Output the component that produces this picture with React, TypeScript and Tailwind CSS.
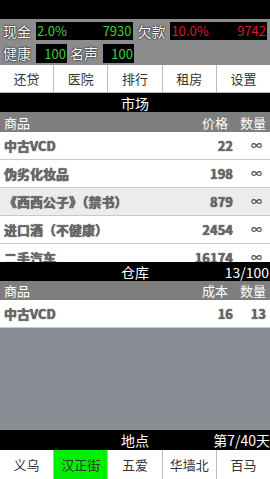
import React from "react";

const F = { fontFamily: '"Noto Sans CJK SC", "Noto Sans", sans-serif' };

const market = [
  { name: "中古VCD", price: 22, bg: "bg-white" },
  { name: "伪劣化妆品", price: 198, bg: "bg-white" },
  { name: "《西西公子》（禁书）", price: 879, bg: "bg-[#ececec]" },
  { name: "进口酒（不健康）", price: 2454, bg: "bg-white" },
  { name: "二手汽车", price: 16174, bg: "bg-white" },
];

const itemText =
  "font-bold text-[#6a6a6a] [text-shadow:0_0_1px_#111]";

export default function App() {
  return (
    <div className="w-[270px] h-[479px] overflow-hidden flex flex-col bg-black" style={F}>
      <div className="h-[19px] bg-black" />
      {/* stats */}
      <div className="h-[46px] bg-[#8c8c8c] flex flex-col justify-center gap-[4px] px-[3px]">
        <div className="flex items-center h-[18px]">
          <span className="w-[33px] text-[14px] text-white [text-shadow:0_0_2px_#000,0_0_1px_#000] leading-none">现金</span>
          <div className="w-[97px] h-[18px] bg-black flex items-center justify-between px-[1px] text-[13px] text-[#3ad13a] leading-none">
            <span>2.0%</span>
            <span>7930</span>
          </div>
          <span className="ml-[5px] w-[33px] text-[14px] text-white [text-shadow:0_0_2px_#000,0_0_1px_#000] leading-none">欠款</span>
          <div className="w-[97px] h-[18px] bg-black flex items-center justify-between px-[1px] text-[13px] text-[#d81a2a] leading-none">
            <span>10.0%</span>
            <span>9742</span>
          </div>
        </div>
        <div className="flex items-center h-[19px]">
          <span className="w-[33px] text-[14px] text-white [text-shadow:0_0_2px_#000,0_0_1px_#000] leading-none">健康</span>
          <div className="w-[31px] h-[19px] bg-black flex items-center justify-end px-[1px] text-[13px] text-[#3ad13a] leading-none">100</div>
          <span className="ml-[3px] w-[33px] text-[14px] text-white [text-shadow:0_0_2px_#000,0_0_1px_#000] leading-none">名声</span>
          <div className="w-[31px] h-[19px] bg-black flex items-center justify-end px-[1px] text-[13px] text-[#3ad13a] leading-none">100</div>
        </div>
      </div>
      {/* actions */}
      <div className="h-[28px] flex bg-white">
        {["还贷", "医院", "排行", "租房", "设置"].map((t, i) => (
          <div
            key={t}
            className={`flex-1 flex items-center justify-center text-[13px] text-[#333] border-b border-[#bbb] ${i < 4 ? "border-r border-r-[#bbb]" : ""}`}
          >
            {t}
          </div>
        ))}
      </div>
      {/* market title */}
      <div className="h-[19px] bg-black text-white text-[14px] flex items-center justify-center leading-none">市场</div>
      <div className="h-[20px] bg-[#7e7e7e] flex items-center text-white text-[13px] leading-none px-[4px]">
        <span className="flex-1">商品</span>
        <span className="w-[26px] text-right">价格</span>
        <span className="w-[38px] text-right">数量</span>
      </div>
      <div className="h-[130px] overflow-hidden bg-white flex flex-col">
        {market.map((m) => (
          <div
            key={m.name}
            className={`h-[28px] shrink-0 flex items-center px-[4px] border-b border-[#c8c8c8] text-[13px] ${m.bg}`}
          >
            <span className={`flex-1 ${itemText}`}>{m.name}</span>
            <span className={`text-right ${itemText}`}>{m.price}</span>
            <span className="w-[33px] text-right text-[11px] text-[#555] font-bold pr-[4px]">∞</span>
          </div>
        ))}
      </div>
      {/* warehouse */}
      <div className="h-[19px] bg-black text-white text-[14px] flex items-center relative leading-none">
        <span className="flex-1 text-center">仓库</span>
        <span className="absolute right-[1px]">13/100</span>
      </div>
      <div className="h-[19px] bg-[#7e7e7e] flex items-center text-white text-[13px] leading-none px-[4px]">
        <span className="flex-1">商品</span>
        <span className="w-[26px] text-right">成本</span>
        <span className="w-[38px] text-right">数量</span>
      </div>
      <div className="h-[130px] bg-[#898d94] flex flex-col">
        <div className="h-[28px] bg-white flex items-center px-[4px] text-[13px] border-b border-[#c8c8c8]">
          <span className={`flex-1 ${itemText}`}>中古VCD</span>
          <span className={`text-right ${itemText}`}>16</span>
          <span className={`w-[33px] text-right ${itemText}`}>13</span>
        </div>
      </div>
      {/* location */}
      <div className="h-[20px] bg-black text-white text-[14px] flex items-center relative leading-none">
        <span className="flex-1 text-center">地点</span>
        <span className="absolute right-[0px]">第7/40天</span>
      </div>
      <div className="h-[29px] flex bg-white">
        {["义乌", "汉正街", "五爱", "华墙北", "百马"].map((t, i) => (
          <div
            key={t}
            className={`flex-1 flex items-center justify-center text-[13px] text-[#333] ${i < 4 ? "border-r border-[#bbb]" : ""} ${t === "汉正街" ? "bg-[#00ee00]" : ""}`}
          >
            {t}
          </div>
        ))}
      </div>
    </div>
  );
}
